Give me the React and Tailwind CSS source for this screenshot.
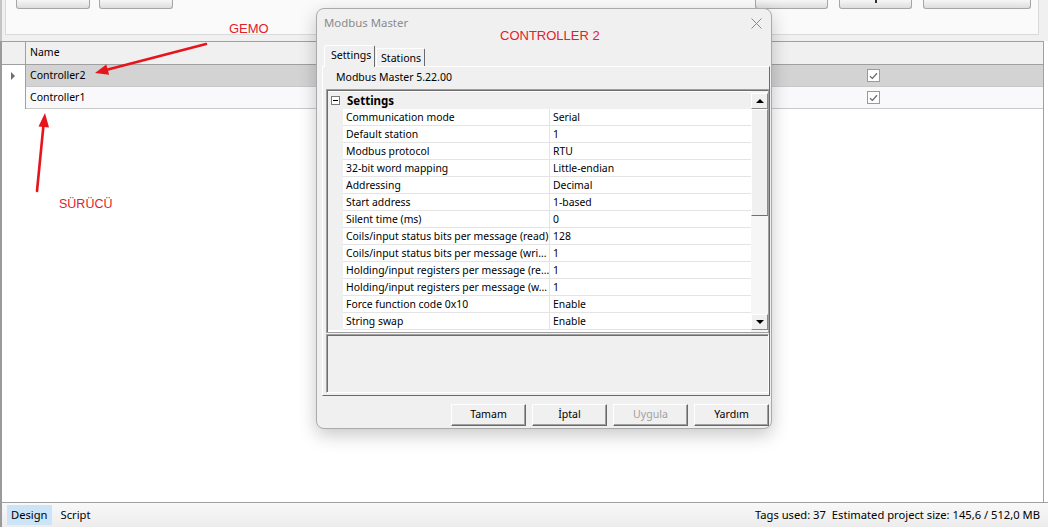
import React from 'react';

const settings = [
  ['Communication mode', 'Serial'],
  ['Default station', '1'],
  ['Modbus protocol', 'RTU'],
  ['32-bit word mapping', 'Little-endian'],
  ['Addressing', 'Decimal'],
  ['Start address', '1-based'],
  ['Silent time (ms)', '0'],
  ['Coils/input status bits per message (read)', '128'],
  ['Coils/input status bits per message (wri...', '1'],
  ['Holding/input registers per message (re...', '1'],
  ['Holding/input registers per message (w...', '1'],
  ['Force function code 0x10', 'Enable'],
  ['String swap', 'Enable'],
];

const drivers = ['Controller2', 'Controller1'];

function CheckBox() {
  return (
    <div className="w-[13px] h-[13px] border border-[#9a9a9a] bg-white flex items-center justify-center">
      <svg width="9" height="8" viewBox="0 0 9 8">
        <path d="M1 4.2 L3.4 6.4 L8 1.2" fill="none" stroke="#6b6b6b" strokeWidth="1.3" />
      </svg>
    </div>
  );
}

function ScrollButton({ up }) {
  return (
    <div className="h-[16px] bg-[#f0f0f0] border border-t-white border-l-white border-r-[#8a8a8a] border-b-[#8a8a8a] flex items-center justify-center">
      {up ? (
        <div className="w-0 h-0 border-x-[4px] border-x-transparent border-b-[4px] border-b-black" />
      ) : (
        <div className="w-0 h-0 border-x-[4px] border-x-transparent border-t-[4px] border-t-black" />
      )}
    </div>
  );
}

function DialogButton({ children, disabled }) {
  return (
    <div
      className={`w-[75px] h-[22px] bg-[#f0f0f0] border border-t-white border-l-white border-r-[#6a6a6a] border-b-[#6a6a6a] shadow-[inset_-1px_-1px_0_#a0a0a0] flex items-center justify-center text-[10.6px] ${disabled ? 'text-[#a0a0a0]' : 'text-black'}`}
    >
      {children}
    </div>
  );
}

function PropertyGrid() {
  return (
    <div className="h-[244px] border border-[#a0a0a0] bg-white flex">
      <div className="flex-1 flex flex-col border-t border-l border-[#6d6d6d] pt-px">
        {/* category header */}
        <div className="h-[17px] bg-[#f0f0f0] flex items-center">
          <div className="w-[15px] flex justify-center">
            <div className="w-[9px] h-[9px] border border-[#7a7a7a] bg-white flex items-center justify-center">
              <div className="w-[5px] h-px bg-black" />
            </div>
          </div>
          <span className="pl-[4px] text-[11.5px] font-bold leading-none">Settings</span>
        </div>
        {settings.map(([label, value]) => (
          <div key={label} className="h-[17px] flex text-[10.4px] leading-[16px]">
            <div className="w-[15px] bg-[#f0f0f0]" />
            <div className="w-[207px] border-b border-r border-[#e4e4e4] pl-[3px] whitespace-nowrap overflow-hidden">{label}</div>
            <div className="flex-1 border-b border-[#e4e4e4] pl-[3px] whitespace-nowrap">{value}</div>
          </div>
        ))}
      </div>
      {/* vertical scrollbar */}
      <div className="w-[17px] flex flex-col border-t border-[#6d6d6d] pt-[2px] pb-[2px] bg-[#f4f4f4]">
        <ScrollButton up />
        <div className="h-[107px] bg-[#f0f0f0] border border-t-white border-l-white border-r-[#8a8a8a] border-b-[#707070]" />
        <div className="flex-1 bg-[#f6f6f6]" />
        <ScrollButton />
      </div>
    </div>
  );
}

function ModbusDialog() {
  return (
    <div className="absolute left-[316px] top-[8px] w-[456px] h-[421px] bg-[#f0f0f0] border border-[#aaaaaa] rounded-[8px] shadow-[0_6px_18px_rgba(0,0,0,0.22)] flex flex-col">
      <div className="relative h-[36px]">
        <span className="absolute left-[7px] top-[5px] text-[11.4px] text-[#8a8a8a]">Modbus Master</span>
        <svg className="absolute right-[9px] top-[9px]" width="11" height="11" viewBox="0 0 11 11">
          <path d="M0.5 0.5 L10.5 10.5 M10.5 0.5 L0.5 10.5" stroke="#8a8a8a" strokeWidth="1" />
        </svg>
      </div>

      {/* tab strip */}
      <div className="relative z-10 h-[21px] flex items-end pl-[7px]">
        <div className="w-[51px] h-[22px] -mb-px pl-[6px] bg-[#f0f0f0] border-t border-l border-white border-r border-r-[#6a6a6a] rounded-t-[2px] text-[10.6px] leading-[19px]">
          Settings
        </div>
        <div className="w-[49px] h-[18px] ml-px pl-[4px] bg-[#f0f0f0] border-t border-l border-white border-r border-r-[#6a6a6a] rounded-t-[2px] text-[10.6px] leading-[18px]">
          Stations
        </div>
      </div>

      {/* tab page */}
      <div className="ml-[5px] mr-px h-[330px] border border-t-white border-l-white border-r-[#6a6a6a] border-b-[#6a6a6a] pl-[3px] flex flex-col">
        <div className="h-[22px] pl-[10px] flex items-center text-[10.5px]">Modbus Master 5.22.00</div>
        <PropertyGrid />
        <div className="mt-px h-[59px] border border-[#a0a0a0] border-b-white border-r-white">
          <div className="h-full border-t border-l border-[#6d6d6d]" />
        </div>
      </div>

      <div className="mt-[8px] flex justify-end gap-[6px] pr-[2px]">
        <DialogButton>Tamam</DialogButton>
        <DialogButton>İptal</DialogButton>
        <DialogButton disabled>Uygula</DialogButton>
        <DialogButton>Yardım</DialogButton>
      </div>
    </div>
  );
}

function Notes() {
  return (
    <>
      <svg className="absolute inset-0 pointer-events-none" width="1048" height="527">
        <line x1="206" y1="44" x2="106" y2="70" stroke="#e8141c" strokeWidth="2.6" strokeLinecap="round" />
        <polygon points="95,73 106.3,64.6 109.1,74.8" fill="#e8141c" />
        <line x1="37" y1="191" x2="43.5" y2="125" stroke="#e8141c" strokeWidth="2.6" strokeLinecap="round" />
        <polygon points="45,113 49,127.5 38.5,126.5" fill="#e8141c" />
      </svg>
      <span className="absolute left-[229px] top-[21px] text-[13px] leading-[16px] text-[#e3202a] font-['Liberation_Sans',sans-serif]">GEMO</span>
      <span className="absolute left-[500px] top-[28px] text-[13px] leading-[16px] text-[#e3202a] font-['Liberation_Sans',sans-serif]">CONTROLLER 2</span>
      <span className="absolute left-[59px] top-[196px] text-[12.5px] leading-[16px] text-[#e3202a] font-['Liberation_Sans',sans-serif]">SÜRÜCÜ</span>
    </>
  );
}

export default function App() {
  return (
    <div className="relative w-[1048px] h-[527px] overflow-hidden bg-white text-black font-['Noto_Sans',sans-serif]">
      <div className="h-full flex flex-col">
        {/* toolbar */}
        <div className="h-[41px] bg-[#f0f0f0] border-l-2 border-[#c4c4c4] pl-[3px] pr-[9px]">
          <div className="h-[35px] bg-[#fafafa] border border-t-0 border-[#dadada] flex justify-between pl-[10px] pr-[7px]">
            <div className="flex gap-[9px]">
              <div className="w-[74px] h-[9px] bg-gradient-to-b from-[#f6f6f6] to-[#dedede] border border-t-0 border-[#a6a6a6] rounded-b-[3px]" />
              <div className="w-[74px] h-[9px] bg-gradient-to-b from-[#f6f6f6] to-[#dedede] border border-t-0 border-[#a6a6a6] rounded-b-[3px]" />
            </div>
            <div className="flex gap-[11px]">
              <div className="w-[73px] h-[9px] bg-gradient-to-b from-[#f6f6f6] to-[#dedede] border border-t-0 border-[#a6a6a6] rounded-b-[3px]" />
              <div className="w-[73px] h-[9px] bg-gradient-to-b from-[#f6f6f6] to-[#dedede] border border-t-0 border-[#a6a6a6] rounded-b-[3px] flex justify-center">
                <div className="w-[2px] h-[3px] bg-[#303030]" />
              </div>
              <div className="w-[108px] h-[9px] bg-gradient-to-b from-[#f6f6f6] to-[#dedede] border border-t-0 border-[#a6a6a6] rounded-b-[3px]" />
            </div>
          </div>
        </div>

        {/* driver list */}
        <div className="flex-1 mr-[4px] border-t border-r border-[#a0a0a0] border-l-2 border-l-[#9a9a9a]">
          <div className="h-[23px] bg-[#f0f0f0] border-b border-[#a0a0a0] flex">
            <div className="w-[24px] border-r border-[#a0a0a0]" />
            <div className="flex-1 flex items-center pl-[4px] text-[10.5px]">Name</div>
          </div>
          {drivers.map((name, i) => (
            <div key={name} className="h-[22px] flex">
              <div className="w-[24px] border-r border-[#a0a0a0] flex items-center pl-[9px]">
                {i === 0 && (
                  <div className="w-0 h-0 border-y-[4px] border-y-transparent border-l-[4px] border-l-[#6e6e6e]" />
                )}
              </div>
              <div
                className={`flex-1 flex items-center border-b border-[#c8c8c8] text-[10.5px] ${i === 0 ? 'bg-[#d3d3d3]' : 'bg-[#f9f9fc]'}`}
              >
                <span className="w-[841px] pl-[4px]">{name}</span>
                <CheckBox />
              </div>
            </div>
          ))}
        </div>

        {/* status bar */}
        <div className="h-[25px] border-t border-[#a0a0a0] border-l-2 border-l-[#9a9a9a] bg-gradient-to-b from-[#f8f8f8] to-[#ececec] flex items-center justify-between pl-[5px] pr-[8px] text-[11.2px]">
          <div className="flex items-center h-full py-[2px]">
            <span className="h-full px-[4px] bg-[#cce4f7] flex items-center">Design</span>
            <span className="ml-[9px]">Script</span>
          </div>
          <div>
            <span className="mr-[6px]">Tags used: 37</span>
            <span>Estimated project size: 145,6 / 512,0 MB</span>
          </div>
        </div>
      </div>

      <ModbusDialog />
      <Notes />
    </div>
  );
}
